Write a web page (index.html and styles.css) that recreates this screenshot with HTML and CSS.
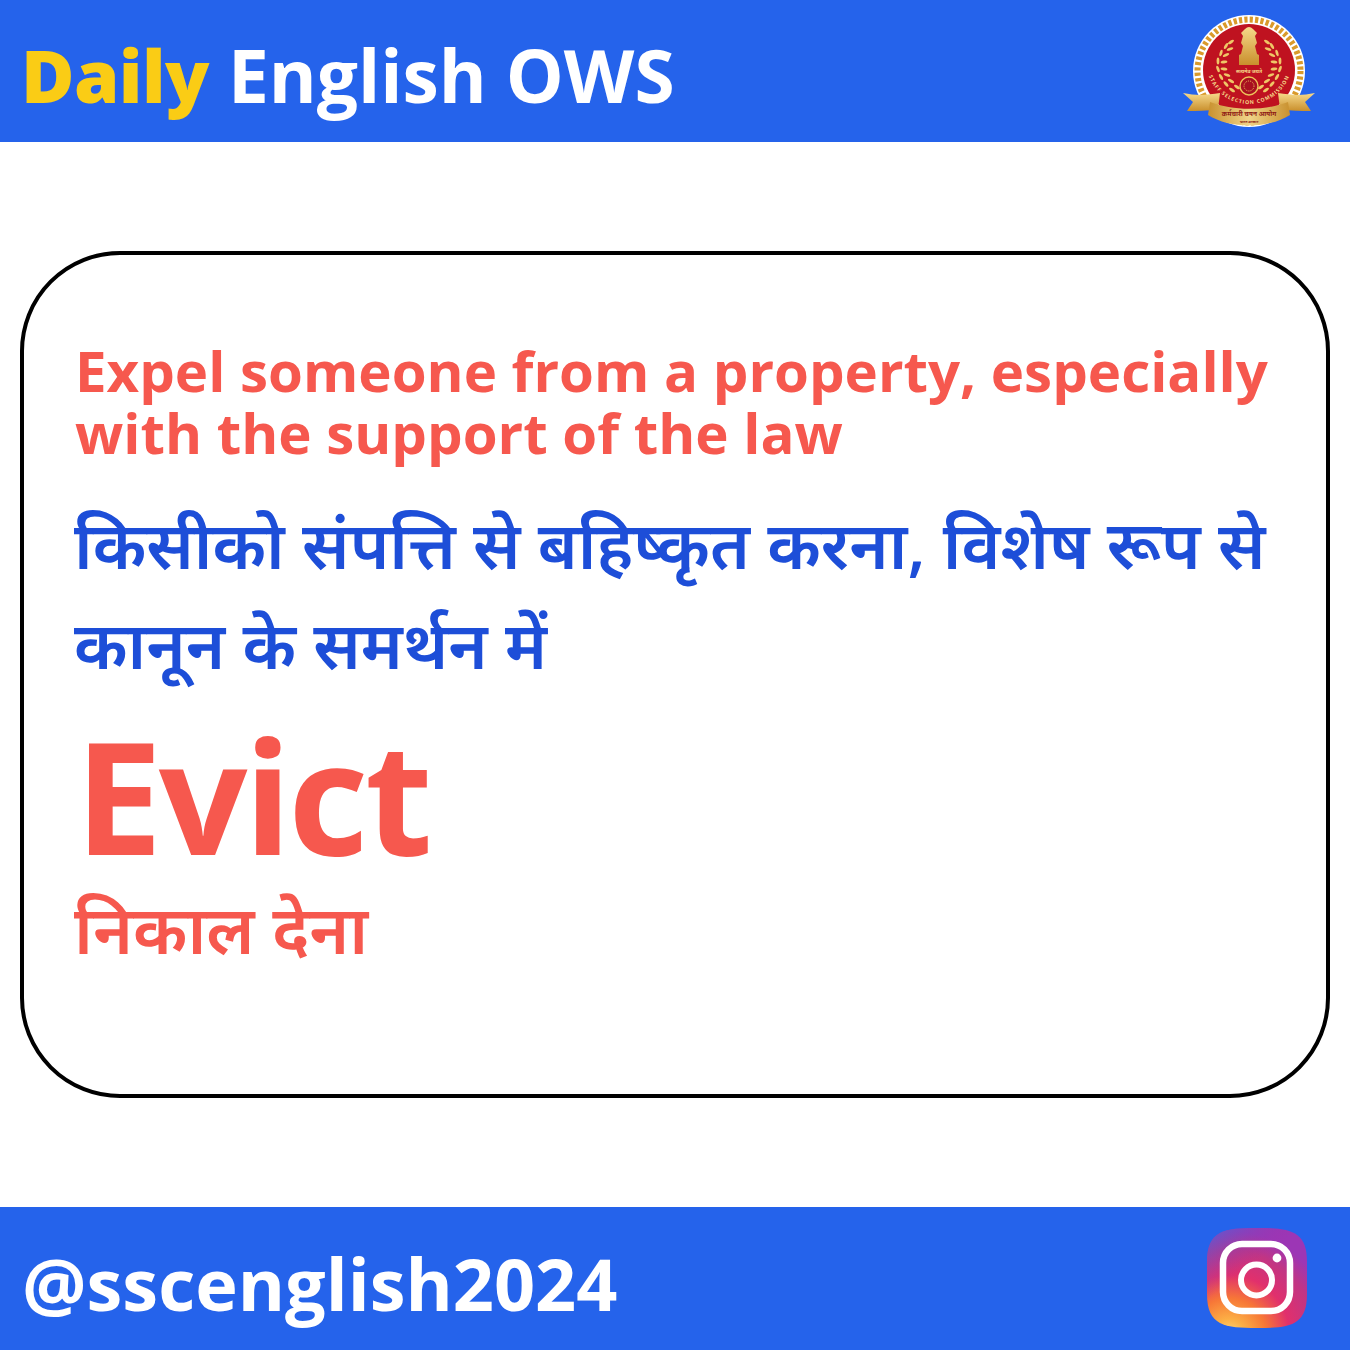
FILE: index.html
```html
<!DOCTYPE html>
<html lang="en">
<head>
<meta charset="utf-8">
<title>Daily English OWS</title>
<link rel="stylesheet" href="styles.css">
</head>
<body>
<div class="page">
<header class="bar top">
<h1 class="title"><span class="daily">Daily</span> English OWS</h1>
<svg class="seal" viewBox="0 0 132 112" aria-hidden="true">
<defs>
<linearGradient id="gold" x1="0" y1="0" x2="0" y2="1">
<stop offset="0" stop-color="#f6d98a"/>
<stop offset="1" stop-color="#c98f2c"/>
</linearGradient>
<linearGradient id="band" x1="0" y1="0" x2="1" y2="0">
<stop offset="0" stop-color="#c9912f"/>
<stop offset="0.5" stop-color="#f0d488"/>
<stop offset="1" stop-color="#c9912f"/>
</linearGradient>
<path id="arc" d="M23 46 A43 43 0 0 0 109 46"/>
<g id="wreath" fill="#efc766">
<ellipse cx="48" cy="27" rx="3.4" ry="1.4" transform="rotate(-35 48 27)"/>
<ellipse cx="43" cy="31" rx="3.4" ry="1.4" transform="rotate(-60 43 31)"/>
<ellipse cx="47" cy="34" rx="3.4" ry="1.4" transform="rotate(-20 47 34)"/>
<ellipse cx="38" cy="38" rx="3.4" ry="1.4" transform="rotate(-75 38 38)"/>
<ellipse cx="43" cy="40" rx="3.4" ry="1.4" transform="rotate(-25 43 40)"/>
<ellipse cx="35" cy="46" rx="3.4" ry="1.4" transform="rotate(-90 35 46)"/>
<ellipse cx="41" cy="47" rx="3.4" ry="1.4" transform="rotate(-10 41 47)"/>
<ellipse cx="35" cy="54" rx="3.4" ry="1.4" transform="rotate(70 35 54)"/>
<ellipse cx="41" cy="54" rx="3.4" ry="1.4" transform="rotate(10 41 54)"/>
<ellipse cx="38" cy="62" rx="3.4" ry="1.4" transform="rotate(60 38 62)"/>
<ellipse cx="44" cy="60" rx="3.4" ry="1.4" transform="rotate(20 44 60)"/>
<ellipse cx="43" cy="69" rx="3.4" ry="1.4" transform="rotate(50 43 69)"/>
<ellipse cx="48" cy="66" rx="3.4" ry="1.4" transform="rotate(30 48 66)"/>
<ellipse cx="49" cy="75" rx="3.4" ry="1.4" transform="rotate(35 49 75)"/>
<ellipse cx="54" cy="72" rx="3.4" ry="1.4" transform="rotate(35 54 72)"/>
</g>
</defs>
<circle cx="66" cy="56" r="56" fill="#fff"/>
<circle cx="66" cy="56" r="51.5" fill="none" stroke="#d99a2b" stroke-width="6" stroke-dasharray="3.2 2.2"/>
<circle cx="66" cy="55" r="46" fill="#bf1220"/>
<use href="#wreath"/>
<use href="#wreath" transform="matrix(-1 0 0 1 132 0)"/>
<path d="M62 14 q4 -4 8 0 l4 4 -2 3 2 7 -2 3 2 8 2 1 v10 H56 v-10 l2 -1 2 -8 -2 -3 2 -7 -2 -3z" fill="url(#gold)"/>
<text class="seal-motto" x="66" y="58" text-anchor="middle">सत्यमेव जयते</text>
<circle cx="66" cy="71" r="9" fill="#a81020" stroke="#eec35a" stroke-width="1.4"/>
<circle cx="66" cy="71" r="5" fill="none" stroke="#eec35a" stroke-width="1" stroke-dasharray="1 1"/>
<text class="seal-arc"><textPath href="#arc" startOffset="50%" text-anchor="middle">STAFF SELECTION COMMISSION</textPath></text>
<path d="M0 78 C14 81 24 80 37 78 L35 94 C24 96 14 96 4 96 L10 87 Z" fill="url(#gold)"/>
<path d="M132 78 C118 81 108 80 95 78 L97 94 C108 96 118 96 128 96 L122 87 Z" fill="url(#gold)"/>
<path d="M27 87 C50 96 82 96 105 87 L107 100 C85 114 47 114 25 100 Z" fill="url(#band)"/>
<text class="seal-band" x="66" y="101" text-anchor="middle">कर्मचारी चयन आयोग</text>
<text class="seal-small" x="66" y="108" text-anchor="middle">भारत सरकार</text>
</svg>
</header>
<main class="content">
<section class="card">
<p class="en-def">Expel someone from a property, especially with the support of the law</p>
<p class="hi-def">किसीको संपत्ति से बहिष्कृत करना, विशेष रूप से कानून के समर्थन में</p>
<p class="word">Evict</p>
<p class="hi-word">निकाल देना</p>
</section>
</main>
<footer class="bar bottom">
<div class="handle">@sscenglish2024</div>
<svg class="insta" viewBox="0 0 100 100" aria-hidden="true">
<defs>
<radialGradient id="ig" cx="0.22" cy="1.08" r="1.05">
<stop offset="0" stop-color="#ffdc80"/>
<stop offset="0.16" stop-color="#fcaf45"/>
<stop offset="0.36" stop-color="#f77737"/>
<stop offset="0.58" stop-color="#e1306c"/>
<stop offset="0.82" stop-color="#c13584"/>
<stop offset="1" stop-color="#9c36b5"/>
</radialGradient>
<linearGradient id="igb" x1="0" y1="0" x2="0.35" y2="0.45">
<stop offset="0" stop-color="#4f63d8" stop-opacity="0.95"/>
<stop offset="1" stop-color="#a02fa8" stop-opacity="0"/>
</linearGradient>
<path id="sq" d="M50 0 C82 0 100 2 100 34 V66 C100 98 82 100 50 100 C18 100 0 98 0 66 V34 C0 2 18 0 50 0Z"/>
</defs>
<use href="#sq" fill="url(#ig)"/>
<use href="#sq" fill="url(#igb)"/>
<rect x="16" y="16" width="67" height="67" rx="19" fill="none" stroke="#fff" stroke-width="6.5"/>
<circle cx="49.5" cy="52" r="15.5" fill="none" stroke="#fff" stroke-width="6"/>
<circle cx="70" cy="30" r="4.4" fill="#fff"/>
</svg>
</footer>
</div>
</body>
</html>
```
FILE: styles.css
```css
* { box-sizing: border-box; }
html, body { margin: 0; padding: 0; background: #fff; }
.page {
  width: 1350px; height: 1350px; display: flex; flex-direction: column;
  font-family: "Open Sans", "Noto Sans", "Liberation Sans", sans-serif;
  font-weight: 700;
}
.bar { height: 142px; background: #2563eb; display: flex; align-items: center; justify-content: space-between; color: #fff; flex: none; }
.top { padding: 6px 35px 0 21px; }
.top .seal { margin-top: -6px; }
.bottom { height: 143px; padding: 8px 43px 0 22px; }
.title { margin: 0; font-size: 73px; font-weight: 700; line-height: 1; }
.daily { color: #facc15; font-weight: 800; letter-spacing: -0.6px; }
.seal { width: 132px; height: 112px; }
.seal-motto { font-size: 5px; fill: #f6d98a; }
.seal-arc { font-size: 5.2px; fill: #f6d98a; letter-spacing: 0.9px; font-weight: 700; }
.seal-band { font-size: 6.5px; fill: #8f1a14; font-weight: 700; }
.seal-small { font-size: 3.6px; fill: #8f1a14; }
.handle { font-size: 72px; line-height: 1; }
.insta { width: 100px; height: 100px; margin-top: -10px; }
.content { flex: 1; display: flex; align-items: center; padding: 0 20px; }
.card { width: 100%; height: 847px; border: 4.5px solid #000; border-radius: 100px; padding: 85px 51px 0; }
.card p { margin: 0; }
.en-def { color: #f6584e; font-size: 56.4px; line-height: 62px; }
.hi-def { color: #1d4ed8; font-size: 66.5px; line-height: 100px; margin: 29px 0 0 -1px !important; font-weight: 600; }
.word { color: #f6584e; font-size: 156px; line-height: 170px; letter-spacing: -3.5px; margin-top: 17px !important; }
.hi-word { color: #f6584e; font-size: 67.5px; line-height: 90px; margin: 3px 0 0 -1px !important; font-weight: 600; }
```
